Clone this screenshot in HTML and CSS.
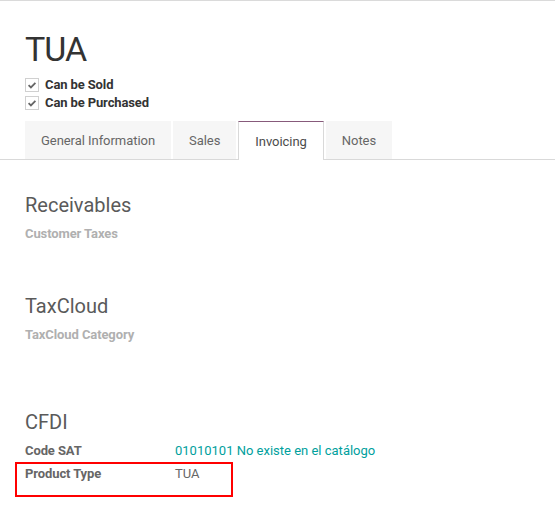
FILE: index.html
```html
<!DOCTYPE html>
<html>
<head>
<meta charset="utf-8">
<link rel="stylesheet" href="styles.css">
</head>
<body>
<div class="sheet">
  <h1 class="title">TUA</h1>
  <div class="checks">
    <div class="check"><span class="box"><svg viewBox="0 0 12 12" width="12" height="12"><path d="M2.6 6.2 L4.9 8.4 L9.4 3.8" fill="none" stroke="#666" stroke-width="1.8"/></svg></span>Can be Sold</div>
    <div class="check"><span class="box"><svg viewBox="0 0 12 12" width="12" height="12"><path d="M2.6 6.2 L4.9 8.4 L9.4 3.8" fill="none" stroke="#666" stroke-width="1.8"/></svg></span>Can be Purchased</div>
  </div>
  <div class="tabs">
    <div class="tab">General Information</div>
    <div class="tab">Sales</div>
    <div class="tab active">Invoicing</div>
    <div class="tab">Notes</div>
  </div>
  <div class="content">
    <section class="group g-first">
      <h2 class="group-title">Receivables</h2>
      <div class="row"><span class="lbl muted">Customer Taxes</span></div>
    </section>
    <section class="group g-second">
      <h2 class="group-title">TaxCloud</h2>
      <div class="row"><span class="lbl muted">TaxCloud Category</span></div>
    </section>
    <section class="group g-third">
      <h2 class="group-title">CFDI</h2>
      <div class="row field"><span class="lbl">Code SAT</span><span class="val link">01010101 No existe en el catálogo</span></div>
      <div class="row field highlight-wrap"><span class="lbl">Product Type</span><span class="val">TUA</span><span class="highlight"></span></div>
    </section>
  </div>
</div>
</body>
</html>
```
FILE: styles.css
```css
html, body {
  margin: 0;
  padding: 0;
  background: #fff;
}
body {
  font-family: Roboto, "Noto Sans", sans-serif;
  color: #4c4c4c;
}
.sheet {
  border-top: 1px solid #dadada;
  padding-top: 27px;
  min-height: 520px;
}
.title {
  margin: 0 0 0 25px;
  font-size: 34px;
  line-height: 42px;
  letter-spacing: -1px;
  font-weight: 400;
  color: #333;
}
.checks {
  margin-top: 6px;
  padding-left: 25px;
}
.check {
  display: flex;
  align-items: center;
  font-size: 13px;
  line-height: 18px;
  height: 18px;
  font-weight: 700;
  letter-spacing: -0.12px;
  color: #333;
}
.box {
  width: 12px;
  height: 12px;
  border: 1px solid #d0d0d0;
  margin-right: 6px;
  display: flex;
  align-items: center;
  justify-content: center;
  background: #fff;
}
.box svg { display: block; }
.tabs {
  margin-top: 9px;
  display: flex;
  padding-left: 25px;
  border-bottom: 1px solid #d9d9d9;
}
.tab {
  height: 38px;
  line-height: 39px;
  padding: 0 16px;
  margin-right: 2px;
  background: #f6f6f6;
  font-size: 13px;
  letter-spacing: -0.05px;
  color: #666;
}
.tab.active {
  background: #fff;
  color: #4c4c4c;
  border: 1px solid #d9d9d9;
  border-top: 1px solid #875a7b;
  border-bottom: none;
  line-height: 40px;
  margin-bottom: -1px;
  box-sizing: border-box;
  height: 39px;
}
.content {
  padding-left: 25px;
}
.group-title {
  margin: 0;
  font-size: 20px;
  line-height: 24px;
  font-weight: 400;
  color: #5a5a5a;
}
.g-first { padding-top: 33px; }
.g-second { padding-top: 51px; }
.g-third { padding-top: 66px; }
.row {
  margin-top: 8px;
  font-size: 13px;
  line-height: 18px;
  display: flex;
}
.row.field {
  margin-top: 0;
  line-height: 23px;
}
.g-third .group-title { margin-bottom: 5px; }
.lbl {
  font-weight: 700;
  color: #666;
  width: 150px;
  letter-spacing: -0.1px;
}
.lbl.muted { color: #b0b0b0; }
.val { color: #666; }
.val.link { color: #00a09d; }
.highlight-wrap { position: relative; }
.highlight {
  position: absolute;
  left: -10px;
  top: 0;
  width: 214px;
  height: 31px;
  border: 2px solid #f00;
}
```
